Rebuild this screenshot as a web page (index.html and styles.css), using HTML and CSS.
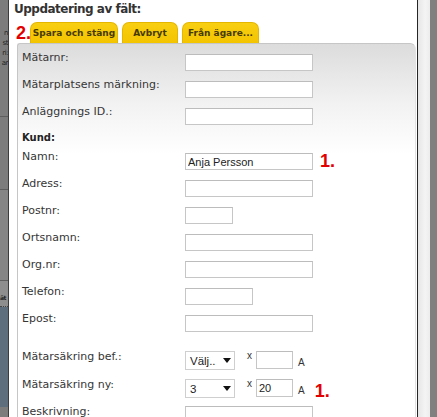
FILE: index.html
```html
<!DOCTYPE html>
<html lang="sv">
<head>
<meta charset="utf-8">
<title>Uppdatering av fält</title>
<link rel="stylesheet" href="styles.css">
</head>
<body>
<div class="screen">
  <div class="side-left">
    <div class="sl-block sl-a">
      <span>n</span><span>st</span><span>ri:</span><span>ar</span>
    </div>
    <div class="sl-block sl-b"></div>
    <div class="sl-block sl-c"></div>
    <div class="sl-block sl-d"><span class="sl-bold">ät</span></div>
    <div class="sl-block sl-e"></div>
  </div>

  <div class="main">
    <h1 class="title">Uppdatering av fält:</h1>

    <div class="tabs">
      <span class="mark mark-tabs">2.</span>
      <a class="tab tab-save">Spara och stäng</a>
      <a class="tab tab-cancel">Avbryt</a>
      <a class="tab tab-owner">Från ägare...</a>
    </div>

    <div class="panel">
      <div class="row"><span class="lbl">Mätarnr:</span><div class="ctl"><input class="field w-long" type="text"></div></div>
      <div class="row"><span class="lbl">Mätarplatsens märkning:</span><div class="ctl"><input class="field w-long" type="text"></div></div>
      <div class="row"><span class="lbl">Anläggnings ID.:</span><div class="ctl"><input class="field w-long" type="text"></div></div>
      <div class="row row-head"><span class="lbl lbl-bold">Kund:</span></div>
      <div class="row"><span class="lbl">Namn:</span><div class="ctl"><input class="field w-long" type="text" value="Anja Persson"><span class="mark mark-row">1.</span></div></div>
      <div class="row"><span class="lbl">Adress:</span><div class="ctl"><input class="field w-long" type="text"></div></div>
      <div class="row"><span class="lbl">Postnr:</span><div class="ctl"><input class="field w-short" type="text"></div></div>
      <div class="row"><span class="lbl">Ortsnamn:</span><div class="ctl"><input class="field w-long" type="text"></div></div>
      <div class="row"><span class="lbl">Org.nr:</span><div class="ctl"><input class="field w-long" type="text"></div></div>
      <div class="row"><span class="lbl">Telefon:</span><div class="ctl"><input class="field w-mid" type="text"></div></div>
      <div class="row"><span class="lbl">Epost:</span><div class="ctl"><input class="field w-long" type="text"></div></div>

      <div class="spacer"></div>

      <div class="row row-b row-tall"><span class="lbl">Mätarsäkring bef.:</span>
        <div class="ctl">
          <div class="select"><span class="sel-text">Välj..</span><svg class="sel-arrow" width="8" height="5" viewBox="0 0 8 5"><path d="M0 0H8L4 5Z" fill="#111"/></svg></div>
          <span class="times">x</span>
          <input class="field w-amp" type="text">
          <span class="unit">A</span>
        </div>
      </div>
      <div class="row row-b"><span class="lbl">Mätarsäkring ny:</span>
        <div class="ctl">
          <div class="select"><span class="sel-text">3</span><svg class="sel-arrow" width="8" height="5" viewBox="0 0 8 5"><path d="M0 0H8L4 5Z" fill="#111"/></svg></div>
          <span class="times">x</span>
          <input class="field w-amp" type="text" value="20">
          <span class="unit">A</span>
          <span class="mark mark-amp">1.</span>
        </div>
      </div>
      <div class="row row-b"><span class="lbl">Beskrivning:</span><div class="ctl"><input class="field w-long" type="text"></div></div>
    </div>
  </div>

  <div class="side-right"><div class="sr-light"></div><div class="sr-dark"></div></div>
</div>
</body>
</html>
```

FILE: styles.css
```css
html, body {
  margin: 0;
  padding: 0;
  background: #ffffff;
}

.screen {
  display: flex;
  width: 437px;
  height: 417px;
  overflow: hidden;
  font-family: "DejaVu Sans", Verdana, sans-serif;
}

/* left cropped neighbour window */
.side-left {
  width: 8px;
  flex: none;
  border-right: 1px solid #3c3c3c;
  background: #7c7c7c;
  display: flex;
  flex-direction: column;
  overflow: hidden;
}
.sl-block {
  flex: none;
  border-bottom: 1px solid #5e5e5e;
  font-size: 7px;
  line-height: 10px;
  letter-spacing: -0.5px;
  color: #1e1e1e;
  white-space: nowrap;
}
.sl-a {
  height: 117px;
  padding-top: 28px;
  box-sizing: border-box;
  display: flex;
  flex-direction: column;
  align-items: flex-end;
}
.sl-a span { display: block; }
.sl-b { height: 72px; }
.sl-c { height: 90px; background: #858585; }
.sl-d {
  height: 26px;
  padding-top: 12px;
  box-sizing: border-box;
  background: #8e8e8e;
  border-bottom: 1px dotted #444;
}
.sl-bold { font-weight: bold; display: block; font-size: 6px; }
.sl-e { height: 100px; background: #5f6e7c; border-bottom: none; }

/* main dialog area */
.main {
  width: 408px;
  flex: none;
  display: flex;
  flex-direction: column;
}

.title {
  flex: none;
  margin: 0;
  padding: 2px 0 0 5px;
  height: 22px;
  box-sizing: border-box;
  font-size: 12px;
  line-height: 15px;
  font-weight: bold;
  letter-spacing: -0.5px;
  color: #333333;
}

.tabs {
  flex: none;
  position: relative;
  display: flex;
  gap: 4px;
  padding-left: 21px;
  height: 21px;
}

.tab {
  display: block;
  flex: none;
  height: 21px;
  box-sizing: border-box;
  padding: 1px 0 0 0;
  text-align: center;
  background: linear-gradient(#f9cf12, #f3c400);
  border: 1px solid #e4b600;
  border-bottom: none;
  border-radius: 7px 7px 0 0;
  font-size: 9px;
  line-height: 19px;
  font-weight: bold;
  color: #463a00;
  white-space: nowrap;
}
.tab-save { width: 88px; }
.tab-cancel { width: 56px; }
.tab-owner { width: 77px; }

.mark {
  font-family: "Liberation Sans", Arial, sans-serif;
  font-weight: bold;
  font-size: 18px;
  line-height: 18px;
  color: #e30000;
}
.mark-tabs {
  position: absolute;
  left: 7px;
  top: 2px;
}
.mark-row {
  margin-left: 7px;
  margin-top: -1px;
}
.mark-amp {
  margin-left: 10px;
  margin-top: 3px;
}

.panel {
  flex: 1;
  min-height: 0;
  margin-left: 8px;
  width: 399px;
  box-sizing: border-box;
  border: 1px solid #c6c6c6;
  border-right-color: #e2e2e2;
  border-bottom: none;
  border-radius: 3px 6px 0 0;
  padding: 5px 0 0 4px;
  background: linear-gradient(#dcdcdc 0px, #f2f2f2 60px, #ffffff 110px);
}

.row {
  display: grid;
  grid-template-columns: 163px auto;
  align-items: start;
  height: 27px;
}
.row-head { height: 18px; }
.row-tall { height: 28px; }

.lbl {
  margin-top: 2px;
  font-size: 11px;
  line-height: 13px;
  color: #363636;
  white-space: nowrap;
}
.lbl-bold {
  margin-top: 2px;
  font-size: 10px;
  line-height: 12px;
  font-weight: bold;
  color: #222222;
}

.ctl {
  display: flex;
  align-items: flex-start;
  margin-top: 5px;
}
.row-b .ctl { margin-top: 0; }
.row-b .lbl { margin-top: -1px; }

.field {
  display: block;
  margin: 0;
  height: 17px;
  box-sizing: border-box;
  border: 1px solid #c6c6c6;
  border-top-color: #bcbcbc;
  background: #ffffff;
  padding: 0 1px 0 2px;
  font-family: "Liberation Sans", Arial, sans-serif;
  font-size: 11px;
  color: #222222;
  outline: none;
}
.w-long { width: 128px; }
.w-short { width: 48px; }
.w-mid { width: 68px; }
.w-amp { width: 37px; height: 18px; margin-left: 4px; }

.spacer { height: 14px; }

.select {
  width: 50px;
  height: 19px;
  box-sizing: border-box;
  border: 1px solid #cfcfcf;
  background: #ffffff;
  display: flex;
  align-items: center;
  justify-content: space-between;
  padding: 0 3px 0 4px;
  font-family: "Liberation Sans", Arial, sans-serif;
  font-size: 11.5px;
  color: #222222;
}
.sel-arrow { display: block; flex: none; }

.times {
  margin-left: 12px;
  font-family: "Liberation Sans", Arial, sans-serif;
  font-size: 10px;
  line-height: 10px;
  color: #333333;
}
.unit {
  margin-left: 5px;
  margin-top: 7px;
  font-family: "Liberation Sans", Arial, sans-serif;
  font-size: 10px;
  line-height: 10px;
  color: #333333;
}

/* right window edge */
.side-right {
  flex: none;
  display: flex;
  border-left: 1px solid #262626;
}
.sr-light {
  width: 12px;
  background: linear-gradient(to right, #e6e6e6, #f4f4f4 60%, #ececec);
}
.sr-dark {
  width: 7px;
  background: #808080;
}
```
